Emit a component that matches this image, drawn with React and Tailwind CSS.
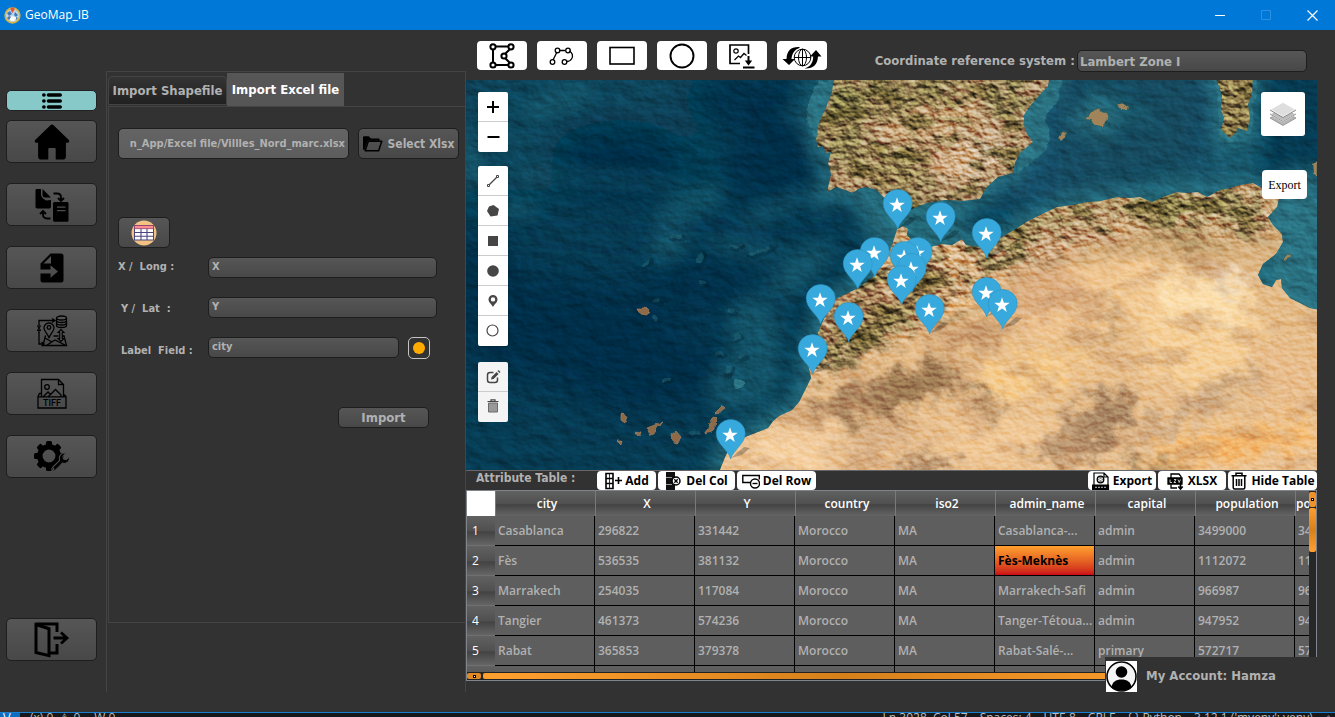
import React from "react";

const UI = "font-['DejaVu_Sans_Condensed','DejaVu_Sans',sans-serif] font-bold";
const SEGOE = "font-['Open_Sans','Noto_Sans',sans-serif]";
const RAISED =
  "rounded-[5px] border border-[#1e1e1e] bg-linear-to-b from-[#565656] to-[#484848] text-[#b1b1b1]";

/* ---------- sidebar icons ---------- */

const ListIcon = () => (
  <svg width="20" height="16" viewBox="0 0 20 16" aria-hidden="true">
    {[2, 8, 14].map((y) => (
      <g key={y} stroke="#000" strokeWidth="3.6" strokeLinecap="round">
        <path d={`M1.8 ${y}h.2M6.5 ${y}H18.2`} />
      </g>
    ))}
  </svg>
);

const HomeIcon = () => (
  <svg width="36" height="36" viewBox="0 0 36 36" aria-hidden="true">
    <path d="M18 .6c.7 0 1.3.3 1.8.8l14.8 14.4c1.3 1.4.6 3-1.1 3h-1.6v13.6c0 1.9-1.2 3.2-3 3.2h-7.2V25.4c0-.9-.5-1.4-1.4-1.4h-4.6c-.9 0-1.4.5-1.4 1.4v10.2H7.1c-1.8 0-3-1.3-3-3.2V18.8H2.5c-1.7 0-2.4-1.6-1.1-3L16.2 1.4c.5-.5 1.1-.8 1.8-.8z" />
  </svg>
);

const TransferIcon = () => (
  <svg width="34" height="34" viewBox="0 0 34 34" aria-hidden="true">
    <path d="M2 1h4v5.500c0 3 3.500 5 5 6l5-.5v6.500c0 1.500-1 2-2 2H2.500C1 20.500.5 19.500.5 18.500V2.500C.5 1.500 1 1 2 1z" />
    <path d="M7.500 1l8.500 8.500h-6c-1.500 0-2.500-1-2.500-2.500z" />
    <path fillRule="evenodd" d="M20 14h12c1 0 1.500.7 1.500 1.500v16.800c0 1-.6 1.500-1.500 1.500H20c-1.200 0-2-.6-2-1.500V15.500c0-.9.8-1.500 2-1.500zM22 18.500v1.300h8.500v-1.300zM22 22v1.300h8.500V22z" />
    <path d="M18.500 5.500h3.500c2.500 0 4 1.500 4 4v3M23 10l3 3 3-3M15.500 30.500H12c-2.500 0-4-1.500-4-4v-3M5 26l3-3 3 3" fill="none" stroke="#000" strokeWidth="1.900" />
  </svg>
);

const FileImportIcon = () => (
  <svg width="24" height="30" viewBox="0 0 24 30" aria-hidden="true">
    <path fillRule="evenodd" d="M10.500.5H21c1.700 0 2.500.9 2.500 2.500v24c0 1.700-.8 2.500-2.500 2.500H3C1.400 29.500.5 28.700.5 27v-6.500h10v4.200l7.500-6.200-7.500-6.200v4.200H.5v-6zM11 3L3.500 10.500H11z" />
  </svg>
);

const MapDataIcon = () => (
  <svg width="32" height="32" viewBox="0 0 32 32" fill="none" stroke="#000" strokeWidth="1.300" aria-hidden="true">
    <path d="M18 5.500H3v4M16 3.500l3 2-3 2M3 17v12h4M5.500 27l2.500 2-2.500 2" />
    <path d="M1 11h4M1 15.500h4M3 9v9M1.500 11.500l1.500 1.700-1.500 1.700M4.500 11.500L3 13.200l1.500 1.700" strokeWidth="1" />
    <ellipse cx="25.500" cy="3" rx="5" ry="2" />
    <path d="M20.500 3v7.500c0 1.200 2.200 2 5 2s5-.8 5-2V3M20.500 5.500c0 1.200 2.200 2 5 2s5-.8 5-2M20.500 8c0 1.200 2.200 2 5 2s5-.8 5-2" />
    <path d="M13 23c-1-4-5-6.500-5-10a5 5 0 0 1 10 0c0 3.500-4 6-5 10z" />
    <circle cx="13" cy="12.500" r="1.800" />
    <path d="M9.500 20.500L7 30.500h23.500L28 21h-2M11 30l8-5 10 5M9 23l7 4M22.500 21h-5" />
    <path d="M25 14.500l-3 3h1.700v6H22l3 3 3-3h-1.700v-6H28z" strokeWidth="1.100" />
  </svg>
);

const TiffIcon = () => (
  <svg width="30" height="32" viewBox="0 0 30 32" fill="none" stroke="#000" strokeWidth="1.300" aria-hidden="true">
    <path d="M4.500 19V1.500h17l5 5V19M21.500 1.500v5h5" />
    <circle cx="10" cy="9" r="2.300" />
    <path d="M6 19l5-5 2.500 2.500 5-5 5.500 5.500v2M11 19l2.500-2.500" />
    <path d="M4.500 15.500H2.500L1 18.500v11.500h28V18.500l-1.500-1.500h-1M1 18.800h28" />
    <text x="15" y="28" textAnchor="middle" fontFamily="Roboto, sans-serif" fontWeight="500" fontSize="9" fill="#000" stroke="none">TIFF</text>
  </svg>
);

const GEAR_TEETH = [0, 45, 90, 135, 180, 225, 270, 315];
const GearWrenchIcon = () => (
  <svg width="36" height="32" viewBox="0 0 36 32" aria-hidden="true">
    <circle cx="15" cy="15" r="9.200" fill="none" stroke="#000" strokeWidth="5.500" />
    {GEAR_TEETH.map((a) => (
      <rect key={a} x="12" y="0" width="6" height="6" rx="1.600" transform={`rotate(${a} 15 15)`} />
    ))}
    <path
      d="M18.500 26.500l7.200-7.200c-.8-2.500-.2-4.600 1.300-6 1.400-1.300 3.200-1.600 4.800-1.200l-2.800 3.200.6 2.700 2.700.7 2.900-2.900c.6 1.700.1 3.600-1.200 5-1.500 1.500-3.500 2-5.500 1.300l-7.200 7.200c-.9.8-2 .8-2.800 0-.8-.8-.8-1.900 0-2.800z"
      fill="#000"
      stroke="#4d4d4d"
      strokeWidth="1.100"
    />
    <circle cx="19.700" cy="28" r=".8" fill="#777" />
  </svg>
);

const ExitIcon = () => (
  <svg width="36" height="36" viewBox="0 0 36 36" fill="none" stroke="#000" strokeWidth="3" aria-hidden="true">
    <path d="M2 2.500l13 4.200v27L2 30.500z" />
    <path d="M2 2h21v8M15 31h8v-9" />
    <path d="M19.500 16h12M27 10.500l6 5.500-6 5.500" strokeWidth="2.800" />
  </svg>
);

const NAV = [
  { label: "Home", Icon: HomeIcon },
  { label: "Convert", Icon: TransferIcon },
  { label: "Import file", Icon: FileImportIcon },
  { label: "Geodata", Icon: MapDataIcon },
  { label: "TIFF", Icon: TiffIcon },
  { label: "Settings", Icon: GearWrenchIcon },
];

function Sidebar() {
  const btn = `${RAISED} flex h-[43px] w-full items-center justify-center`;
  return (
    <nav className="flex w-[106px] shrink-0 flex-col pt-[60px] pr-[9px] pb-[51px] pl-[6px]">
      <button aria-label="Menu" className="mb-[9px] flex h-[21px] w-full items-center justify-center rounded-[5px] border border-[#222] bg-[#87c8c8]">
        <ListIcon />
      </button>
      <div className="flex flex-col gap-5">
        {NAV.map(({ label, Icon }) => (
          <button key={label} aria-label={label} className={btn}>
            <Icon />
          </button>
        ))}
      </div>
      <button aria-label="Exit" className={`${btn} mt-auto`}>
        <ExitIcon />
      </button>
    </nav>
  );
}

/* ---------- import panel ---------- */

function Field({ id, label, value, labelClass = "", selectClass = "w-[229px]", children }) {
  return (
    <div className="flex h-[21px] items-center">
      <label htmlFor={id} className={`w-[90px] shrink-0 text-[11px] whitespace-pre ${labelClass}`}>
        {label}
      </label>
      <select id={id} className={`${RAISED} h-[21px] appearance-none px-[3px] text-[11px] ${selectClass}`}>
        <option>{value}</option>
      </select>
      {children}
    </div>
  );
}

function ImportPanel() {
  return (
    <section className={`${UI} mt-[41px] mb-5 flex w-[360px] shrink-0 flex-col border-x border-t border-[#444] pb-[69px] pl-px text-[#b1b1b1]`}>
      <div className="flex h-[34px] items-end" role="tablist">
        <button role="tab" aria-selected="false" className="mb-px h-[29px] w-[119px] rounded-tl-[4px] rounded-tr-[4px] border border-[#444] bg-linear-to-b from-[#343434] to-[#212121] text-[13px] whitespace-nowrap">
          Import Shapefile
        </button>
        <button role="tab" aria-selected="true" className="h-[33px] w-[117px] bg-[#565656] text-[13px] whitespace-nowrap text-white">
          Import Excel file
        </button>
      </div>
      <form className="flex flex-1 flex-col border-t border-b border-l border-[#444] pt-[21px] pl-[9px]" onSubmit={(e) => e.preventDefault()}>
        <div className="flex gap-[9px]">
          <input
            aria-label="Excel file path"
            readOnly
            value="n_App/Excel file/Villles_Nord_marc.xlsx"
            className="h-[31px] w-[231px] rounded-[5px] border border-[#1e1e1e] bg-linear-to-b from-[#646464] to-[#5d5d5d] px-[3px] text-right text-[11px]"
          />
          <button type="button" className={`${RAISED} flex h-[31px] w-[101px] items-center justify-center gap-[5px] text-[12px] whitespace-nowrap`}>
            <svg width="20" height="16" viewBox="0 0 20 16" aria-hidden="true">
              <path d="M0 1.500C0 .7.500.3 1.200.3h4.600L8 2.500h7.500c.8 0 1.200.4 1.200 1.200v1H4.800L1.500 14H1c-.6 0-1-.5-1-1.200z" />
              <path d="M5.300 5.200h13.500l-3.200 9.600H2.200z" fill="none" stroke="#000" strokeWidth="1.500" strokeLinejoin="round" />
            </svg>
            Select Xlsx
          </button>
        </div>
        <button type="button" aria-label="Show table" className={`${RAISED} mt-[58px] flex h-[31px] w-[52px] items-center justify-center`}>
          <svg width="26" height="26" viewBox="0 0 26 26" aria-hidden="true">
            <circle cx="13" cy="13" r="12.500" fill="#f3c283" />
            <rect x="3.500" y="5.500" width="19" height="14.500" fill="#fff" stroke="#4b4580" />
            <rect x="3.500" y="5.500" width="19" height="3.200" fill="#ff8a94" stroke="#8d4467" strokeWidth=".8" />
            <path d="M3.500 12.500h19M3.500 16.200h19M10 9v11M16 9v11" stroke="#4b4580" strokeWidth="1.100" />
          </svg>
        </button>
        <div className="mt-[9px] flex flex-col gap-[19px]">
          <Field id="x-field" label="X /  Long :" value="X" />
          <Field id="y-field" label="Y /  Lat  :" value="Y" labelClass="pt-1 pl-[3px]" />
          <Field id="label-field" label="Label  Field :" value="city" labelClass="pt-2 pl-[3px]" selectClass="w-[191px]">
            <button type="button" aria-label="Label colour" className="ml-[9px] flex h-[22px] w-[22px] items-center justify-center rounded-[5px] border border-[#c4c4c4]">
              <span className="h-3 w-3 rounded-full bg-[#ffaa00]" />
            </button>
          </Field>
        </div>
        <button className={`${RAISED} mt-[49px] ml-[220px] h-[21px] w-[91px] text-[13px] leading-none`}>Import</button>
      </form>
    </section>
  );
}

/* ---------- top toolbar ---------- */

const svgBox = { width: 40, height: 28, viewBox: "0 0 40 28", fill: "none", stroke: "#000", "aria-hidden": true };

const TOOLS = [
  {
    label: "Polygon",
    icon: (
      <svg {...svgBox} strokeWidth="2">
        <path d="M11 7v14M13.500 4.500h14M13.500 23h14M28.500 6.500l-6 6M28.500 21.500l-6-6" />
        <g fill="#fff">
          <circle cx="11" cy="4.800" r="2.600" />
          <circle cx="29" cy="4.800" r="2.600" />
          <circle cx="11" cy="23" r="2.600" />
          <circle cx="29" cy="23" r="2.600" />
          <circle cx="22" cy="14" r="2.600" />
        </g>
      </svg>
    ),
  },
  {
    label: "Polyline",
    icon: (
      <svg {...svgBox} strokeWidth="1.300">
        <path d="M11 18l4-8M17.500 8.500h5.500M27 9c3.500 1.500 4.500 5 2.500 8-1 1.700-2.500 2.500-5 2.500" />
        <circle cx="10.500" cy="20" r="2.300" />
        <circle cx="15.500" cy="8.500" r="2.300" />
        <circle cx="26" cy="8.500" r="2.300" />
        <circle cx="22.500" cy="20" r="2.300" />
      </svg>
    ),
  },
  {
    label: "Rectangle",
    icon: (
      <svg {...svgBox} strokeWidth="1.600">
        <rect x="8" y="5.500" width="24" height="16.500" />
      </svg>
    ),
  },
  {
    label: "Circle",
    icon: (
      <svg {...svgBox} strokeWidth="1.900">
        <circle cx="20" cy="14" r="11.500" />
      </svg>
    ),
  },
  {
    label: "Save image",
    icon: (
      <svg {...svgBox} strokeWidth="1.700">
        <path d="M18 21.500H8V3h18.500v9" />
        <circle cx="14" cy="9" r="2.200" strokeWidth="1.200" />
        <path d="M12.500 18l4-4 2 1.500 3.500-4 2.500 2" strokeWidth="1.300" />
        <path d="M26.500 14v6M21 25.500h11.500" strokeWidth="2" />
        <path d="M22.800 18.500h7.400l-3.700 5z" fill="#000" stroke="none" />
      </svg>
    ),
  },
  {
    label: "Reload map",
    icon: (
      <svg {...svgBox} strokeWidth="1">
        <circle cx="20.500" cy="15.500" r="8.300" />
        <ellipse cx="20.500" cy="15.500" rx="4" ry="8.300" />
        <path d="M20.500 7v17M12.200 15.500h16.600" />
        <path d="M17.500 5C9.500 4.500 5 8 4.500 17H.5L7 23l6-6H9.500c.5-5.500 3-9.500 8-11z" fill="#000" stroke="none" />
        <path d="M22.500 26.500c8.500.5 13-3.500 13.500-12h3.500L34 8l-6 6.500h3.200c0 6-3 10.500-8.700 12z" fill="#000" stroke="none" />
      </svg>
    ),
  },
];

function Toolbar() {
  return (
    <div className="flex h-[50px] shrink-0 justify-between pr-[28px] pl-[11px]">
      <div className="flex gap-[10px] pt-[11px]">
        {TOOLS.map((t) => (
          <button key={t.label} aria-label={t.label} className="flex h-[29px] w-[50px] items-center justify-center rounded-[4px] bg-white">
            {t.icon}
          </button>
        ))}
      </div>
      <div className={`${UI} flex items-start gap-[2px] pt-5 text-[13px] text-[#b1b1b1]`}>
        <label htmlFor="crs" className="leading-[21px] whitespace-nowrap">Coordinate reference system :</label>
        <select id="crs" className={`${RAISED} h-[22px] w-[230px] appearance-none px-[2px] text-[13px] leading-none`}>
          <option>Lambert Zone I</option>
        </select>
      </div>
    </div>
  );
}

/* ---------- map ---------- */

const IBERIA =
  "M834 76L832 92 825 110 819 122 816 140 818 147 823 146 826 153 831 152 828 163 831 174 827 192 836 187 845 190 853 193 858 189 866 187 877 190 883 197 889 206 895 213 902 215 912 209 927 203 945 200 962 201 980 199 987 187 998 177 1013 173 1015 163 1020 153 1033 142 1027 134 1024 125 1024 115 1031 105 1037 98 1048 86 1050 76z";
const AFRICA =
  "M719 472L725 457 731 445 745 437 768 428 773 421 779 416 792 410 799 402 805 390 811 378 808 364 812 350 815 340 821 325 829 309 836 299 848 293 858 288 873 277 884 262 892 245 897 229 903 226 908 229 907 235 914 242 930 247 942 244 952 245 962 239 966 245 978 247 990 240 1002 237 1017 228 1028 221 1040 215 1057 207 1072 205 1087 202 1100 201 1117 197 1130 198 1140 197 1152 202 1163 197 1177 192 1187 193 1198 192 1207 197 1220 190 1230 188 1240 185 1253 183 1262 188 1270 195 1279 199 1277 207 1268 217 1273 225 1282 234 1283 242 1276 254 1263 264 1258 275 1263 284 1272 287 1276 280 1281 279 1282 288 1290 298 1300 303 1310 308 1320 310 1320 472z";
const SARDINIA = "M1215 76L1222 95 1221 110 1224 118 1221 130 1230 138 1236 133 1238 128 1247 131 1250 118 1248 104 1252 95 1253 76z";
const ISLANDS = [
  "M1085 118L1091 112 1100 108 1102 112 1108 113 1107 120 1102 127 1095 124 1092 120z",
  "M1117 105L1124 104 1128 107 1127 111 1119 108z",
  "M1058 138L1061 133 1067 132 1065 137 1061 140z",
  "M1313 165L1318 160 1318 178 1314 174z",
  "M1282 259L1288 254 1293 256 1286 260z",
  "M637 308L644 308 650 310 648 315 640 314z",
  "M647 428L657 424 663 421 658 427 654 434 650 435z",
  "M671 435L676 431 681 437 678 443 672 442z",
  "M704 434L709 427 712 418 716 416 715 428 711 432z",
  "M715 413L722 406 725 409 721 412z",
  "M621 414L627 416 625 423 621 420z",
  "M617 441L622 441 621 445z",
  "M636 432L641 433 639 436z",
];

const SEA_DEEP = [
  [800, 120, 60, 45], [780, 170, 60, 35], [560, 330, 110, 55], [640, 370, 90, 45],
  [620, 160, 70, 40], [700, 285, 60, 28], [480, 290, 40, 60], [730, 100, 50, 22],
];
const SEA_LIGHT = [
  [690, 205, 40, 12, -25], [780, 205, 45, 8, -25], [668, 245, 22, 16, -30], [745, 248, 40, 7, 8],
  [600, 178, 90, 5, 4], [470, 160, 12, 30, 0], [745, 380, 40, 30, -30], [800, 270, 40, 16, -40],
  [755, 330, 25, 35, -20], [1235, 150, 30, 30, 0], [1170, 185, 60, 10, -15], [1120, 108, 36, 10, 20],
  [560, 100, 40, 10, -20], [510, 210, 30, 8, 0], [815, 90, 20, 30, 0], [800, 118, 20, 10, 20],
];
const SEAMOUNTS = [
  [676, 236, 9, 4, 0], [700, 258, 4, 9, 20], [702, 282, 5, 4, 0], [657, 301, 5, 4, 0], [655, 318, 3, 6, -30],
  [731, 311, 5, 3, 0], [737, 337, 5, 4, -30], [720, 353, 5, 3, 0], [742, 357, 6, 3, -20], [729, 370, 4, 8, 40],
  [666, 380, 6, 4, -30], [735, 246, 8, 3, 0], [760, 251, 16, 4, -20], [645, 264, 8, 3, -40], [695, 433, 8, 4, 0],
];
const LAND_PATCHES = [
  ["#8a7a4c", 845, 120, 26, 45, 10], ["#6f6a3e", 860, 95, 40, 12, -20], ["#7d6f43", 925, 95, 40, 14, -20],
  ["#c7a474", 935, 120, 55, 18, -15], ["#d0ad84", 960, 160, 40, 20, -25], ["#8d7b4a", 890, 170, 40, 12, 5],
  ["#7b7045", 1010, 95, 26, 14, -50], ["#d9c0a0", 985, 150, 22, 10, -40], ["#6c6238", 910, 195, 30, 6, -10],
  ["#a48259", 860, 320, 45, 35, -30], ["#6f6236", 885, 325, 62, 8, -27], ["#665a33", 832, 360, 34, 7, -22],
  ["#97774d", 925, 285, 30, 26, 0], ["#6a6036", 915, 255, 22, 10, 10], ["#6b6638", 1010, 243, 40, 8, -16],
  ["#8a7b4a", 1090, 216, 60, 9, -8], ["#716a38", 1180, 206, 55, 8, 0], ["#8b7d50", 1240, 208, 26, 16, 0],
  ["#c49f73", 1060, 240, 70, 16, -22], ["#9b7751", 900, 390, 60, 20, -20], ["#a8845f", 850, 400, 40, 14, -20],
  ["#9a7d4e", 1180, 240, 40, 6, 14], ["#efc591", 1090, 300, 80, 30, -20], ["#f5cf98", 1200, 330, 60, 55, -20],
  ["#dcae80", 1040, 290, 45, 24, -30], ["#f5cb8c", 1030, 375, 55, 18, -14], ["#f2ca94", 1150, 290, 50, 22, 0],
  ["#a78462", 1095, 425, 46, 24, -40], ["#b8946f", 1060, 440, 34, 18, -30], ["#f0c896", 1000, 440, 60, 18, -10],
  ["#ca9d70", 970, 340, 40, 14, -10], ["#8f6f4f", 975, 395, 34, 5, 38], ["#f7bf75", 1230, 445, 90, 16, -8],
  ["#efa958", 1250, 445, 40, 6, -6], ["#c7a580", 1200, 405, 80, 8, -28], ["#e8bd8c", 1290, 380, 30, 40, 0],
  ["#d6ae84", 870, 440, 50, 14, -10], ["#f0ca9c", 800, 445, 50, 16, -10], ["#f7d3a4", 780, 458, 50, 10, 0],
  ["#8b6f50", 1150, 466, 30, 6, 0], ["#a98563", 930, 465, 34, 9, 0], ["#fff0d8", 1230, 280, 26, 6, 10],
  ["#a98c7e", 1224, 284, 12, 4, 25], ["#c49e72", 1108, 320, 7, 24, 8], ["#fbdfae", 1200, 300, 50, 20, 10],
];

const MARKERS = [
  [897, 205], [940, 218], [986, 234], [917, 253], [874, 253], [904, 257], [857, 265], [911, 269],
  [901, 281], [986, 293], [820, 300], [1002, 305], [929, 310], [848, 318], [812, 350], [730, 435],
];

function Satellite() {
  return (
    <svg className="absolute inset-0 h-full w-full" viewBox="466 80 851 390" preserveAspectRatio="xMidYMid slice" role="img" aria-label="Satellite map">
      <defs>
        <filter id="soft" x="-50%" y="-50%" width="200%" height="200%">
          <feGaussianBlur stdDeviation="9" />
        </filter>
        <filter id="softer" x="-60%" y="-60%" width="220%" height="220%">
          <feGaussianBlur stdDeviation="18" />
        </filter>
        <filter id="patch" x="-50%" y="-50%" width="200%" height="200%" colorInterpolationFilters="sRGB">
          <feGaussianBlur stdDeviation="7" result="b" />
          <feTurbulence type="fractalNoise" baseFrequency="0.05" numOctaves="5" seed="8" result="n" />
          <feDisplacementMap in="b" in2="n" scale="50" xChannelSelector="R" yChannelSelector="G" />
        </filter>
        <filter id="coast" x="-5%" y="-5%" width="110%" height="110%" colorInterpolationFilters="sRGB">
          <feTurbulence type="fractalNoise" baseFrequency="0.15" numOctaves="2" seed="3" result="n" />
          <feDisplacementMap in="SourceGraphic" in2="n" scale="5" xChannelSelector="R" yChannelSelector="G" />
        </filter>
        <filter id="seaRelief" x="0" y="0" width="100%" height="100%" colorInterpolationFilters="sRGB">
          <feTurbulence type="fractalNoise" baseFrequency="0.05 0.08" numOctaves="4" seed="14" />
          <feDiffuseLighting surfaceScale="2" lightingColor="#fff" diffuseConstant="0.8">
            <feDistantLight azimuth="315" elevation="38" />
          </feDiffuseLighting>
        </filter>
        <filter id="landRelief" x="0" y="0" width="100%" height="100%" colorInterpolationFilters="sRGB">
          <feTurbulence type="fractalNoise" baseFrequency="0.11 0.16" numOctaves="5" seed="5" />
          <feDiffuseLighting surfaceScale="2.4" lightingColor="#fff" diffuseConstant="0.84">
            <feDistantLight azimuth="300" elevation="38" />
          </feDiffuseLighting>
        </filter>
        <filter id="scrub" x="0" y="0" width="100%" height="100%" colorInterpolationFilters="sRGB">
          <feTurbulence type="fractalNoise" baseFrequency="0.03 0.055" numOctaves="6" seed="21" />
          <feColorMatrix values="0 0 0 0 0.33  0 0 0 0 0.29  0 0 0 0 0.14  5 0 0 0 -2.5" />
        </filter>
        <filter id="dust" x="0" y="0" width="100%" height="100%" colorInterpolationFilters="sRGB">
          <feTurbulence type="fractalNoise" baseFrequency="0.018 0.035" numOctaves="6" seed="33" />
          <feColorMatrix values="0 0 0 0 0.7  0 0 0 0 0.5  0 0 0 0 0.35  0 5 0 0 -2.7" />
        </filter>
        <clipPath id="land">
          <path d={IBERIA} />
          <path d={AFRICA} />
          <path d={SARDINIA} />
        </clipPath>
        <mask id="rough" maskUnits="userSpaceOnUse" x="466" y="80" width="851" height="390">
          <g fill="#fff" filter="url(#soft)">
            <path d="M810 60h460v80h-60v-40h-130L1020 200 890 222 810 200z" />
            <path d="M790 380L800 345 836 289 884 252 897 216 960 228 1040 202 1253 170 1295 225 1250 240 1160 226 1080 248 1000 275 960 310 900 335 820 375z" />
          </g>
        </mask>
        <linearGradient id="sand" gradientUnits="userSpaceOnUse" x1="0" y1="185" x2="0" y2="470">
          <stop offset="0" stopColor="#c4a272" />
          <stop offset=".35" stopColor="#e3ba86" />
          <stop offset="1" stopColor="#ecc392" />
        </linearGradient>
      </defs>
      <rect x="466" y="80" width="851" height="390" fill="#063c54" />
      <g filter="url(#softer)">
        <rect x="466" y="60" width="240" height="130" fill="#0a475d" />
        <rect x="1000" y="60" width="240" height="150" fill="#13506a" />
        <rect x="1060" y="60" width="150" height="150" fill="#134b60" />
        {SEA_DEEP.map(([x, y, rx, ry], i) => (
          <ellipse key={i} cx={x} cy={y} rx={rx} ry={ry} fill="#022f48" />
        ))}
      </g>
      <g filter="url(#soft)" opacity=".6">
        {SEA_LIGHT.map(([x, y, rx, ry, r], i) => (
          <ellipse key={i} cx={x} cy={y} rx={rx} ry={ry} fill="#1f6476" transform={`rotate(${r} ${x} ${y})`} />
        ))}
      </g>
      <g filter="url(#soft)" fill="#2a7282" stroke="#2a7282" strokeWidth="22" opacity=".85">
        <path d={IBERIA} />
        <path d={AFRICA} />
        <path d={SARDINIA} />
        <path d={ISLANDS[0]} />
        <path d="M1290 180L1320 180 1320 300 1290 290z" />
        <path d="M860 190L960 205 950 235 880 235z" />
      </g>
      <g fill="#2a7282" stroke="#2a7282" strokeLinejoin="round" filter="url(#coast)">
        <path d={SARDINIA} strokeWidth="8" />
        <path d="M1048 80L1061 80 1058 100 1048 112 1043 122 1050 130 1046 150 1028 165 1018 172 1023 117z" />
        <path d="M1270 190L1320 200 1320 312 1275 300z" />
        <ellipse cx="739" cy="384" rx="6" ry="5" stroke="#0d4a5c" strokeWidth="1" />
        <path d="M834 80L818 82 810 100 806 118 812 130 820 145z" strokeWidth="1" />
      </g>
      <g filter="url(#coast)" opacity=".7">
        {SEAMOUNTS.map(([x, y, rx, ry, r], i) => (
          <g key={i} transform={`translate(${x} ${y}) rotate(${r})`}>
            <ellipse cx="2" cy="2" rx={rx} ry={ry} fill="#03202f" opacity=".5" />
            <ellipse rx={rx * 0.7} ry={ry * 0.6} fill="#256878" opacity=".7" />
          </g>
        ))}
      </g>
      <rect x="466" y="80" width="851" height="390" filter="url(#seaRelief)" opacity=".5" style={{ mixBlendMode: "overlay" }} />
      <g filter="url(#coast)" stroke="#2b5c5c" strokeWidth=".6">
        {ISLANDS.map((d, i) => (
          <path key={i} d={d} fill={i > 4 ? "#8f6a48" : "#a1845a"} stroke={i > 4 ? "#b58a62" : "#2b5c5c"} />
        ))}
      </g>
      <g clipPath="url(#land)">
        <path d={IBERIA} fill="#b3946a" />
        <path d={AFRICA} fill="url(#sand)" />
        <path d={SARDINIA} fill="#8f7a4c" />
        <g filter="url(#patch)">
          {LAND_PATCHES.map(([c, x, y, rx, ry, r], i) => (
            <ellipse key={i} cx={x} cy={y} rx={rx} ry={ry} fill={c} transform={`rotate(${r} ${x} ${y})`} />
          ))}
        </g>
        <rect x="700" y="80" width="617" height="390" filter="url(#dust)" opacity=".35" />
        <g mask="url(#rough)">
          <rect x="700" y="80" width="617" height="390" filter="url(#scrub)" opacity=".7" />
        </g>
        <rect x="700" y="80" width="617" height="390" filter="url(#landRelief)" opacity=".35" style={{ mixBlendMode: "overlay" }} />
        <g mask="url(#rough)" style={{ mixBlendMode: "overlay" }}>
          <rect x="700" y="80" width="617" height="390" filter="url(#landRelief)" opacity=".75" />
        </g>
      </g>
      {MARKERS.map(([x, y]) => (
        <g key={`${x}-${y}`} transform={`translate(${x} ${y})`}>
          <path d="M1 23L14 12 20 13 12 20z" fill="#000" opacity=".25" />
          <path d="M.7 24C-1.500 15-13.800 9-13.800-1.500a14.500 14 0 0 1 29 0C15.200 9 3 15 .7 24z" fill="#38a9dc" stroke="#2f8fbd" strokeWidth=".5" />
          <path d="M0-7.800L1.900-2.300 7.700-2.200 3.100 1.300 4.800 6.900 0 3.600-4.800 6.900-3.100 1.300-7.700-2.200-1.900-2.300z" fill="#fff" />
        </g>
      ))}
    </svg>
  );
}

const glyph = { width: 16, height: 16, viewBox: "0 0 16 16", fill: "#464646", "aria-hidden": true };
const DRAW = [
  ["Draw a polyline", <svg {...glyph}><path d="M4 12l8-8" stroke="#464646" strokeWidth="1.300" /><path d="M2.500 11.500h2v2h-2zM11.500 2.500h2v2h-2z" fill="#fff" stroke="#464646" /></svg>],
  ["Draw a polygon", <svg {...glyph}><path d="M8.500 2L14 6l-1.500 6.500-7 1L2 8l2-4.500z" /></svg>],
  ["Draw a rectangle", <svg {...glyph}><path d="M3 3h10v10H3z" /></svg>],
  ["Draw a circle", <svg {...glyph}><circle cx="8" cy="8" r="5.800" /></svg>],
  ["Draw a marker", <svg {...glyph}><path fillRule="evenodd" d="M8 2a4.500 4.500 0 0 1 4.500 4.500C12.500 9.500 9.500 11 8 14 6.500 11 3.500 9.500 3.500 6.500A4.500 4.500 0 0 1 8 2zm0 2.200a2.200 2.200 0 1 0 0 4.400 2.200 2.200 0 0 0 0-4.400z" /></svg>],
  ["Draw a circle marker", <svg {...glyph}><circle cx="7.500" cy="7.500" r="5.500" fill="#fff" stroke="#464646" strokeWidth="1.200" /></svg>],
];
const EDIT = [
  ["Edit layers", <svg {...glyph}><path d="M8.500 3.500H5c-1.500 0-2.500 1-2.500 2.500v5c0 1.500 1 2.500 2.500 2.500h5c1.500 0 2.500-1 2.500-2.500V8.500" fill="none" stroke="#464646" strokeWidth="1.500" /><path d="M6 10.500l.6-2.600 5-5 2 2-5 5zM12.500 2l1-1 2 2-1 1z" /></svg>],
  ["Delete layers", <svg {...glyph}><path d="M3.500 4h9v9h-9z" fill="#999" stroke="#6b6b6b" /><path d="M2.500 2.500h11M6 2V.8h4V2" fill="none" stroke="#464646" strokeWidth="1.200" /></svg>],
];

function ControlGroup({ items, className = "bg-white" }) {
  return (
    <div className={`flex w-[30px] flex-col divide-y divide-[#ccc] overflow-hidden rounded-[2px] shadow ${className}`}>
      {items.map(([label, icon]) => (
        <button key={label} aria-label={label} className="flex h-[30px] w-full items-center justify-center">
          {icon}
        </button>
      ))}
    </div>
  );
}

const ZOOM = [
  ["Zoom in", <svg {...glyph} stroke="#000" strokeWidth="2"><path d="M8 2v12M2 8h12" /></svg>],
  ["Zoom out", <svg {...glyph} stroke="#000" strokeWidth="2"><path d="M2.500 8h12" /></svg>],
];

function MapView() {
  return (
    <div className="relative min-h-[390px] flex-1 overflow-hidden bg-[#063c54]">
      <Satellite />
      <div className="absolute top-3 left-3 flex flex-col">
        <ControlGroup items={ZOOM} />
        <ControlGroup items={DRAW} className="mt-[14px] bg-white" />
        <ControlGroup items={EDIT} className="mt-4 bg-[#f4f4f4]" />
      </div>
      <button aria-label="Layers" className="absolute top-3 right-3 flex h-11 w-11 items-center justify-center rounded-[3px] bg-white shadow">
        <svg width="28" height="28" viewBox="0 0 28 28" aria-hidden="true">
          <path d="M1 18l13-7 13 7-13 7.500z" fill="#b5b5b5" stroke="#8c8c8c" strokeWidth=".8" />
          <path d="M1 14l13-7 13 7-13 7.500z" fill="#bcbcbc" stroke="#fff" strokeWidth="1.400" />
          <path d="M1 14l13 7.500L27 14" fill="none" stroke="#777" strokeWidth=".8" />
          <path d="M1 9.500L14 2l13 7.500L14 17z" fill="#dedede" stroke="#fff" strokeWidth="1.400" />
          <path d="M1 10l13 7.500L27 10" fill="none" stroke="#777" strokeWidth=".9" />
        </svg>
      </button>
      <button className="absolute top-[90px] right-[10px] h-[29px] w-[45px] rounded-[4px] bg-white font-['Liberation_Serif',serif] text-[12px] text-black">
        Export
      </button>
    </div>
  );
}

/* ---------- attribute table ---------- */

const COLUMNS = ["city", "X", "Y", "country", "iso2", "admin_name", "capital", "population", "population_proper"];
const ROWS = [
  ["Casablanca", "296822", "331442", "Morocco", "MA", "Casablanca-...", "admin", "3499000", "3499000"],
  ["Fès", "536535", "381132", "Morocco", "MA", "Fès-Meknès", "admin", "1112072", "1112072"],
  ["Marrakech", "254035", "117084", "Morocco", "MA", "Marrakech-Safi", "admin", "966987", "966987"],
  ["Tangier", "461373", "574236", "Morocco", "MA", "Tanger-Tétoua...", "admin", "947952", "947952"],
  ["Rabat", "365853", "379378", "Morocco", "MA", "Rabat-Salé-...", "primary", "572717", "572717"],
];
const HEAD = "bg-[linear-gradient(to_bottom,#616161_0%,#505050_50%,#434343_55%,#656565_100%)]";

function TableButton({ children, className }) {
  return (
    <button className={`${SEGOE} flex h-[19px] items-center justify-center gap-[3px] rounded-[4px] bg-white text-[12px] leading-none font-bold whitespace-nowrap text-black ${className}`}>
      {children}
    </button>
  );
}

const small = { width: 18, height: 18, viewBox: "0 0 18 18", fill: "none", stroke: "#000", "aria-hidden": true };

function TableBar() {
  return (
    <div className="flex h-5 items-start border-t border-[#666] bg-[#323232]">
      <span className={`${UI} w-[131px] pl-[10px] text-[12px] leading-[15px] whitespace-nowrap text-[#b1b1b1]`}>Attribute Table :</span>
      <div className="flex gap-[2px]">
        <TableButton className="w-[59px]">
          <svg {...small} strokeWidth="1.600"><path d="M2 1.500h7v15H2zM2 6.500h7M2 11.500h7" strokeWidth="1.600" /><path d="M5.500 2v14" strokeWidth=".8" /><path d="M11 8.500h7M14.500 5v7" /></svg>
          Add
        </TableButton>
        <TableButton className="w-[77px]">
          <svg {...small}><path d="M1 0h9v18H1z" fill="#111" stroke="none" /><path d="M1 5.500h6M1 12.500h6" stroke="#999" /><circle cx="11" cy="9" r="4" fill="#fff" stroke="#000" strokeWidth="1.500" /><path d="M9.300 7.300l3.400 3.400M12.700 7.300l-3.400 3.400" strokeWidth="1.300" /></svg>
          Del Col
        </TableButton>
        <TableButton className="w-[79px]">
          <svg {...small} strokeWidth="1.400"><path d="M8 10.500H.8v-7h16.500v4" /><circle cx="13" cy="11.500" r="4.500" fill="#fff" /><path d="M10.500 11.500h5" /></svg>
          Del Row
        </TableButton>
      </div>
      <div className="ml-auto flex gap-[2px]">
        <TableButton className="w-[68px]">
          <svg {...small} strokeWidth="1.200"><path d="M2 13V1h10l4 4v8M12 1v4h4" /><circle cx="8.500" cy="7.500" r="3.300" fill="#888" strokeWidth="1.300" /><path d="M6 6l5 3M6 9l5-3" stroke="#fff" strokeWidth=".8" /><path d="M.5 13h16v4.500H.5z" fill="#000" /><path d="M3 15.300h11" stroke="#999" strokeDasharray="2 1" /></svg>
          Export
        </TableButton>
        <TableButton className="w-[68px]">
          <svg {...small} strokeWidth="1.300"><path d="M4 6V2h8l2 2.500V6M4 12v4h6" /><path d="M1 6h14v6H1z" fill="#000" /><path d="M3 7.500v3h2M7 7.500h2L7 10.500h2M11 7.500l1.200 3 1.200-3" stroke="#ddd" strokeWidth=".9" /><path d="M13.500 11.500v5M11.300 14.500l2.200 2.500 2.200-2.500" strokeWidth="1.700" /></svg>
          XLSX
        </TableButton>
        <TableButton className="w-[89px]">
          <svg {...small} strokeWidth="1.500"><path d="M1.500 3.800h15M6 3.500V1.200h6v2.300M3.200 4v11.500c0 .8.500 1.500 1.500 1.500h8.600c1 0 1.500-.7 1.500-1.500V4M6.500 7v7M9 7v7M11.500 7v7" /></svg>
          Hide Table
        </TableButton>
      </div>
    </div>
  );
}

function AttributeTable() {
  return (
    <div className="flex h-[211px] shrink-0 flex-col">
      <TableBar />
      <div className="flex min-h-0 flex-1 flex-col border border-[#80848c] bg-[#5e5e5e]">
        <div className="flex min-h-0 flex-1">
          <div className="min-w-0 flex-1 overflow-hidden">
            <table className={`${SEGOE} w-[928px] table-fixed border-separate border-spacing-0 text-[12px] font-semibold`}>
              <colgroup>
                <col className="w-[28px]" />
                {COLUMNS.map((c) => (
                  <col key={c} className="w-[100px]" />
                ))}
              </colgroup>
              <thead>
                <tr className="h-[25px]">
                  <td className="bg-white" />
                  {COLUMNS.map((c, i) => (
                    <th
                      key={c}
                      scope="col"
                      className={`${HEAD} overflow-hidden border-l border-[#7a7a7a] p-0 font-semibold whitespace-nowrap text-white ${i === 8 ? "text-left" : "pl-[3px] text-center"}`}
                    >
                      {c}
                    </th>
                  ))}
                </tr>
              </thead>
              <tbody>
                {ROWS.map((row, r) => (
                  <tr key={r} className="h-[30px]">
                    <th scope="row" className={`${HEAD} border-b border-[#707070] p-0 pl-[5px] text-left font-normal text-white`}>
                      {r + 1}
                    </th>
                    {row.map((v, c) => (
                      <td
                        key={c}
                        className={`overflow-hidden border-r border-b border-black p-0 pl-[3px] whitespace-nowrap ${
                          r === 1 && c === 5 ? "bg-linear-to-b from-[#ffa02f] to-[#ca0619] font-bold text-black" : "text-[#b1b1b1]"
                        }`}
                      >
                        {v}
                      </td>
                    ))}
                  </tr>
                ))}
                <tr className="h-[30px]" aria-hidden="true">
                  <td className={HEAD} />
                  {COLUMNS.map((c) => (
                    <td key={c} className="border-r border-b border-black" />
                  ))}
                </tr>
              </tbody>
            </table>
          </div>
          <div className="flex w-[7px] shrink-0 flex-col gap-px bg-[#272727] pt-px" aria-hidden="true">
            <span className="flex h-[15px] items-center justify-center rounded-[2px] bg-[#f0922a]">
              <span className="h-[3px] w-[3px] border border-black bg-white" />
            </span>
            <span className="h-[44px] rounded-[2px] bg-linear-to-b from-[#ffa02f] via-[#d7801a] to-[#ffa02f]" />
          </div>
        </div>
        <div className="flex h-[8px] shrink-0 items-center gap-[2px] border-y border-[#222] bg-[#272727]" aria-hidden="true">
          <span className="flex h-[6px] w-[14px] items-center justify-center rounded-[2px] bg-[#e08a26]">
            <span className="h-[3px] w-[3px] border border-black bg-white" />
          </span>
          <span className="h-[6px] w-[720px] rounded-[2px] bg-linear-to-r from-[#ffa02f] via-[#d7801a] to-[#ffa02f]" />
        </div>
      </div>
    </div>
  );
}

function Account() {
  return (
    <div className="absolute right-0 bottom-[20px] flex h-[35px] w-[230px] items-center gap-[9px] bg-[#323232] pt-[3px] pl-px">
      <svg width="31" height="31" viewBox="0 0 31 31" aria-hidden="true">
        <path d="M0 0h31v31H0z" fill="#fff" />
        <circle cx="15.500" cy="15.500" r="14.500" fill="#f5f5f5" stroke="#000" strokeWidth="1.600" />
        <circle cx="15.500" cy="11" r="5.800" />
        <path d="M5.500 26.500C6 21 10 18.500 15.500 18.500S25 21 25.500 26.500C22 30.500 9 30.500 5.500 26.500z" />
      </svg>
      <span className={`${UI} text-[13px] whitespace-nowrap text-[#b1b1b1]`}>My Account: Hamza</span>
    </div>
  );
}

/* ---------- window ---------- */

function TitleBar() {
  return (
    <header className={`${SEGOE} flex h-[30px] shrink-0 items-center bg-[#0078d7] pl-1 text-[12px] text-white`}>
      <svg width="17" height="17" viewBox="0 0 17 17" aria-hidden="true">
        <circle cx="8.500" cy="8.500" r="7.300" fill="#bcd6ee" stroke="#d7b23f" strokeWidth="1.700" />
        <path d="M3 6l3-2 2 3-3 2zM11 5l3 3-2 2-2-2z" fill="#3c78bd" />
        <path d="M5 11c1-2 6-2 7 0l-2 3H7z" fill="#fff" />
        <path d="M3 11l2-2 2 1-2 3zM12 10l2 1-2 2z" fill="#4e79a9" />
        <path d="M8.500.5a2 2 0 0 1 2 2.200L8.500 6l-2-3.300A2 2 0 0 1 8.500.5z" fill="#e5533c" />
      </svg>
      <span className="ml-1">GeoMap_IB</span>
      <div className="ml-auto flex h-full">
        <button aria-label="Minimize" className="flex w-[46px] items-center justify-center">
          <svg width="10" height="10" viewBox="0 0 10 10" stroke="#fff" aria-hidden="true"><path d="M0 5.500h10" /></svg>
        </button>
        <button aria-label="Maximize" disabled className="flex w-[46px] items-center justify-center">
          <svg width="10" height="10" viewBox="0 0 10 10" stroke="#2f8fe0" fill="none" aria-hidden="true"><path d="M.5.5h9v9h-9z" /></svg>
        </button>
        <button aria-label="Close" className="flex w-[46px] items-center justify-center">
          <svg width="11" height="11" viewBox="0 0 11 11" stroke="#fff" strokeWidth="1.200" aria-hidden="true"><path d="M.5.5l10 10M10.500.5l-10 10" /></svg>
        </button>
      </div>
    </header>
  );
}

function StatusStrip() {
  return (
    <footer className={`${SEGOE} flex h-[5px] shrink-0 overflow-hidden border-t border-[#1b7fd0] bg-[#16181b] text-[12px] leading-[10px] whitespace-nowrap text-[#bdbdbd]`}>
      <span className="w-[20px] shrink-0 bg-[#0a6fc2] pl-[2px] text-white">⟩⟨</span>
      <span className="ml-[10px]">(x) 0</span>
      <span className="ml-[6px]">⚠ 0</span>
      <span className="ml-[14px]">W 0</span>
      <div className="ml-auto flex gap-3 pr-[3px]">
        <span>Ln 3028, Col 57</span>
        <span>Spaces: 4</span>
        <span>UTF-8</span>
        <span>CRLF</span>
        <span>{"{ }"} Python</span>
        <span>3.12.1 ('myenv': venv)</span>
        <span>⌂</span>
      </div>
    </footer>
  );
}

export default function App() {
  return (
    <div className="flex h-screen min-h-[680px] flex-col overflow-hidden bg-[#323232]">
      <TitleBar />
      <div className="relative flex min-h-0 flex-1">
        <Sidebar />
        <ImportPanel />
        <main className="flex min-w-0 flex-1 flex-col pb-[31px]">
          <Toolbar />
          <div className="flex min-h-0 flex-1 flex-col pr-[18px]">
            <MapView />
            <AttributeTable />
          </div>
        </main>
        <Account />
      </div>
      <StatusStrip />
    </div>
  );
}
